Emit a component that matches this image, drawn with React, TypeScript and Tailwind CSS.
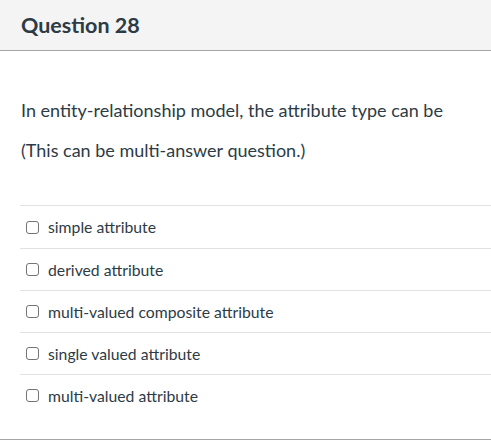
import React from 'react';

const answers = [
  'simple attribute',
  'derived attribute',
  'multi-valued composite attribute',
  'single valued attribute',
  'multi-valued attribute',
];

export default function App() {
  return (
    <div className="w-[491px] h-[440px] bg-white text-[#2d3b45]" style={{ fontFamily: 'Lato, "Open Sans", sans-serif' }}>
      <div className="border-b border-[#a5a5a5]">
        <div className="h-[51px] bg-[#f4f4f4] border-b border-[#a5a5a5] px-[21px] flex items-center">
          <h2 className="text-[21.5px] font-bold text-[#2d3b45]">Question 28</h2>
        </div>
        <div className="pt-[47px] pl-[21px] text-[18px] leading-[24px]">
          <p>In entity-relationship model, the attribute type can be</p>
          <p className="mt-[16px]">(This can be multi-answer question.)</p>
        </div>
        <div className="mt-[43px] ml-[20px] pb-[23px]">
          {answers.map((a, i) => (
            <div key={a} className={`${i === 0 ? 'h-[43px]' : 'h-[42px]'} border-t border-[#e2e2e2] flex items-center`}>
              <span className="ml-[6px] w-[13px] h-[13px] border border-[#747474] rounded-[3px] bg-white shrink-0" />
              <span className="ml-[9px] text-[15.75px]">{a}</span>
            </div>
          ))}
        </div>
      </div>
    </div>
  );
}
